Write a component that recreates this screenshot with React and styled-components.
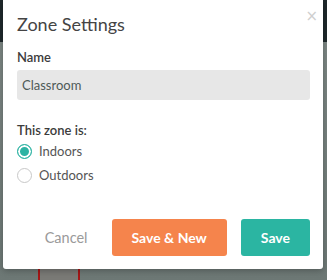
import React, { useState } from "react";
import styled, { createGlobalStyle } from "styled-components";

const Global = createGlobalStyle`
  html, body { margin: 0; padding: 0; }
  body { font-family: Lato, "Open Sans", sans-serif; }
  * { box-sizing: border-box; }
`;

const Page = styled.div`
  position: relative;
  width: 327px;
  height: 280px;
  overflow: hidden;
  background: linear-gradient(to bottom, #1e282b 0, #1e282b 42px, #7c8683 42px, #6d7875 100%);
`;

const BackCard = styled.div`
  position: absolute;
  left: 38px;
  top: 262px;
  width: 42px;
  height: 40px;
  border: 2px solid #a51616;
  background: #7a7a76;
`;

const Modal = styled.div`
  position: relative;
  margin-left: 3px;
  width: 320px;
  height: 269px;
  background: #fff;
  border-radius: 0 0 3px 3px;
  box-shadow: 0 2px 6px rgba(0, 0, 0, 0.25);
  padding: 0 13px 0 14px;
  display: flex;
  flex-direction: column;
`;

const Close = styled.button`
  position: absolute;
  right: 5px;
  top: 9px;
  border: 0;
  background: none;
  color: #cfcfcf;
  font-size: 15px;
  line-height: 15px;
  padding: 0;
  font-family: "DejaVu Sans", sans-serif;
  cursor: pointer;
`;

const Title = styled.h2`
  margin: 0;
  padding-top: 13px;
  font-size: 18px;
  line-height: 22px;
  font-weight: 400;
  color: #444;
`;

const Label = styled.div`
  margin-top: ${(p) => p.$mt}px;
  font-size: 13px;
  line-height: 16px;
  font-weight: 600;
  color: #3c3c3c;
`;

const Input = styled.input`
  margin-top: 5px;
  width: 100%;
  height: 30px;
  border: 0;
  border-radius: 3px;
  background: #e7e7e7;
  padding: 0 5px;
  font-family: inherit;
  font-size: 13px;
  color: #4e5a57;
  outline: none;
`;

const RadioGroup = styled.div`
  margin-top: 5px;
  display: flex;
  flex-direction: column;
  gap: 8px;
`;

const RadioRow = styled.label`
  display: flex;
  align-items: center;
  gap: 7px;
  font-size: 13px;
  line-height: 16px;
  color: #555;
  cursor: pointer;
`;

const Dot = styled.span`
  width: 15px;
  height: 15px;
  border-radius: 50%;
  border: 1px solid ${(p) => (p.$on ? "#2db3a3" : "#c8c8c8")};
  background: ${(p) => (p.$on ? "#2db3a3" : "#fff")};
  box-shadow: ${(p) => (p.$on ? "inset 0 0 0 2px #fff" : "none")};
  flex: none;
`;

const Footer = styled.div`
  margin-top: auto;
  margin-bottom: 13px;
  display: flex;
  justify-content: flex-end;
  align-items: center;
`;

const Btn = styled.button`
  height: 37px;
  padding: 0 ${(p) => p.$px}px;
  margin-left: ${(p) => p.$ml}px;
  border: 0;
  border-radius: 3px;
  font-family: inherit;
  font-size: ${(p) => (p.$bg ? 14 : 14.5)}px;
  color: ${(p) => (p.$bg ? "#fff" : "#9a9a9a")};
  background: ${(p) => p.$bg || "transparent"};
  font-weight: ${(p) => (p.$bg ? 700 : 400)};
  cursor: pointer;
`;

export default function App() {
  const [zone, setZone] = useState("Indoors");
  return (
    <>
      <Global />
      <Page>
        <BackCard />
        <Modal>
          <Close aria-label="Close">×</Close>
          <Title>Zone Settings</Title>
          <Label $mt={14}>Name</Label>
          <Input defaultValue="Classroom" />
          <Label $mt={22}>This zone is:</Label>
          <RadioGroup>
            {["Indoors", "Outdoors"].map((z) => (
              <RadioRow key={z} onClick={() => setZone(z)}>
                <Dot $on={zone === z} />
                {z}
              </RadioRow>
            ))}
          </RadioGroup>
          <Footer>
            <Btn $px={0}>Cancel</Btn>
            <Btn $px={20} $ml={24} $bg="#f5844c">Save &amp; New</Btn>
            <Btn $px={20} $ml={14} $bg="#2bb5a2">Save</Btn>
          </Footer>
        </Modal>
      </Page>
    </>
  );
}
